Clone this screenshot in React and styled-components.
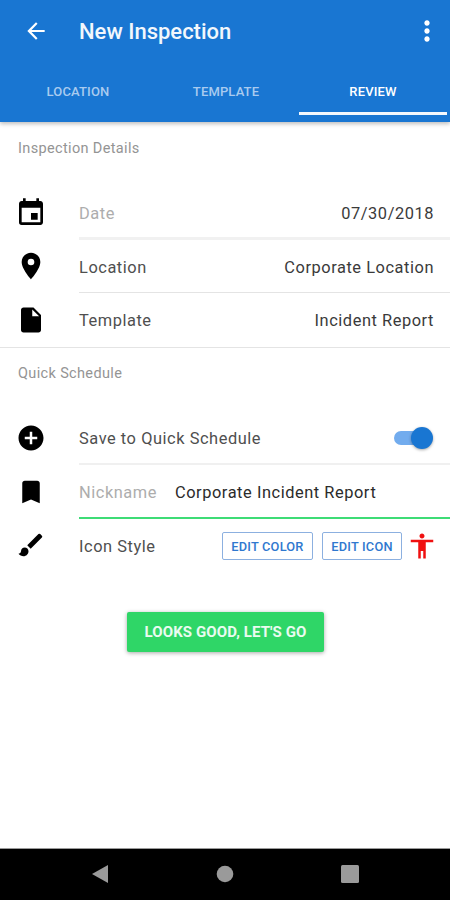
import React from 'react';
import styled, { createGlobalStyle } from 'styled-components';
import {
  MdAccessibility,
  MdAddCircle,
  MdArrowBack,
  MdBookmark,
  MdBrush,
  MdEvent,
  MdInsertDriveFile,
  MdMoreVert,
  MdPlace,
} from 'react-icons/md';

const GlobalStyle = createGlobalStyle`
  html, body {
    margin: 0;
    padding: 0;
    background: #fff;
  }
  * {
    box-sizing: border-box;
  }
`;

const Screen = styled('div')`
  width: 450px;
  height: 900px;
  display: flex;
  flex-direction: column;
  overflow: hidden;
  font-family: Roboto, 'Liberation Sans', sans-serif;
  background: #fff;
`;

const Header = styled('header')`
  height: 122px;
  flex: none;
  background: #1976d2;
  box-shadow: 0 2px 4px rgba(0, 0, 0, 0.25);
  display: flex;
  flex-direction: column;
`;

const Toolbar = styled('div')`
  height: 62px;
  display: flex;
  align-items: center;
  color: #fff;
  padding: 0 7px 0 23px;
`;

const Title = styled('h1')`
  flex: 1;
  margin: 0 0 0 30px;
  font-size: 22px;
  font-weight: 500;
  color: #f2f7fc;
`;

const Tabs = styled('nav')`
  flex: 1;
  display: grid;
  grid-template-columns: 156px 140px 151px;
`;

const Tab = styled('div')`
  display: flex;
  align-items: center;
  justify-content: center;
  height: 53px;
  padding-top: 9px;
  font-size: 13px;
  font-weight: 500;
  letter-spacing: 0.15px;
  color: #a9cbef;
  border-bottom: 3px solid transparent;
`;

const ActiveTab = styled(Tab)`
  margin-left: 3px;
  color: #fff;
  border-bottom-color: #f4f8fd;
`;

const Content = styled('main')`
  flex: 1;
  display: flex;
  flex-direction: column;
`;

const SectionTitle = styled('h2')`
  margin: 0;
  height: 64px;
  padding: ${(p) => p.$top}px 0 0 18px;
  font-size: 14.5px;
  font-weight: 400;
  letter-spacing: 0.35px;
  line-height: 18px;
  color: #949494;
`;

const Row = styled('div')`
  height: 53.5px;
  display: flex;
  align-items: center;
`;

const IconSlot = styled('div')`
  width: 79px;
  flex: none;
  padding-left: 15px;
  color: #000;
`;

const IconBox = styled('div')`
  width: 32px;
  height: 32px;
  display: flex;
  align-items: center;
  justify-content: center;
`;

const RowBody = styled('div')`
  flex: 1;
  height: 100%;
  display: flex;
  align-items: center;
  justify-content: space-between;
  padding-top: ${(p) => (p.$low ? '4px' : '2px')};
  padding-right: ${(p) => (p.$flush ? '0' : '16px')};
  border-bottom: ${(p) => p.$line || '0 none'};
`;

const Label = styled('span')`
  font-size: 16.4px;
  letter-spacing: 0.55px;
  color: ${(p) => (p.$muted ? '#adadad' : '#4f4f4f')};
`;

const Value = styled('span')`
  font-size: 16.4px;
  letter-spacing: 0.55px;
  color: #3a3a3a;
`;

const FullDivider = styled('div')`
  height: 1px;
  flex: none;
  background: #e4e4e4;
`;

const NicknameValue = styled(Value)`
  flex: 1;
  margin-left: 18px;
  color: #2b2b2b;
`;

const Toggle = styled('div')`
  position: relative;
  width: 38px;
  height: 14px;
  margin-right: 2px;
  border-radius: 7px;
  background: #72acee;
`;

const ToggleKnob = styled('div')`
  position: absolute;
  right: -1px;
  top: -4px;
  width: 22px;
  height: 22px;
  border-radius: 50%;
  background: #1976d2;
  box-shadow: 0 1px 3px rgba(0, 0, 0, 0.35);
`;

const StyleActions = styled('div')`
  display: flex;
  align-items: center;
`;

const OutlineButton = styled('button')`
  height: 28px;
  padding: 0;
  width: ${(p) => p.$width}px;
  margin-right: ${(p) => p.$gap}px;
  background: #fff;
  border: 1px solid #8cb0e0;
  border-radius: 2px;
  font-family: inherit;
  font-size: 12.8px;
  font-weight: 500;
  letter-spacing: 0.2px;
  color: #2f78cf;
`;

const RedIcon = styled(MdAccessibility)`
  color: #f01010;
  margin-right: -3px;
`;

const ButtonRow = styled('div')`
  display: flex;
  justify-content: center;
  margin-top: 40px;
  padding-left: 1px;
`;

const PrimaryButton = styled('button')`
  width: 197px;
  height: 40px;
  padding: 0;
  border: 0;
  border-radius: 2px;
  background: #2fd667;
  box-shadow: 0 1px 4px rgba(0, 0, 0, 0.35);
  font-family: inherit;
  font-size: 15px;
  font-weight: 700;
  letter-spacing: 0.1px;
  color: #eafbf0;
`;

const NavBar = styled('footer')`
  height: 52px;
  flex: none;
  background: #000;
  border-top: 1px solid #9a9a9a;
  display: flex;
  align-items: center;
  justify-content: space-between;
  padding: 0 90px 2px;
`;

const NavGlyph = styled('svg')`
  width: 20px;
  height: 20px;
  fill: #9a9a9a;
`;

export default function App() {
  return (
    <Screen>
      <GlobalStyle />
      <Header>
        <Toolbar>
          <MdArrowBack size={26} />
          <Title>New Inspection</Title>
          <MdMoreVert size={32} />
        </Toolbar>
        <Tabs>
          <Tab>LOCATION</Tab>
          <Tab>TEMPLATE</Tab>
          <ActiveTab>REVIEW</ActiveTab>
        </Tabs>
      </Header>
      <Content>
        <SectionTitle $top={18}>Inspection Details</SectionTitle>
        <Row>
          <IconSlot><IconBox><MdEvent size={32} /></IconBox></IconSlot>
          <RowBody $low $line="3px solid #f1f1f1">
            <Label $muted>Date</Label>
            <Value>07/30/2018</Value>
          </RowBody>
        </Row>
        <Row>
          <IconSlot><IconBox><MdPlace size={32} /></IconBox></IconSlot>
          <RowBody $low $line="1px solid #e4e4e4">
            <Label>Location</Label>
            <Value>Corporate Location</Value>
          </RowBody>
        </Row>
        <Row>
          <IconSlot><IconBox><MdInsertDriveFile size={30} /></IconBox></IconSlot>
          <RowBody>
            <Label>Template</Label>
            <Value>Incident Report</Value>
          </RowBody>
        </Row>
        <FullDivider />
        <SectionTitle $top={17}>Quick Schedule</SectionTitle>
        <Row>
          <IconSlot><IconBox><MdAddCircle size={30} /></IconBox></IconSlot>
          <RowBody $line="2px solid #f0f0f0">
            <Label>Save to Quick Schedule</Label>
            <Toggle><ToggleKnob /></Toggle>
          </RowBody>
        </Row>
        <Row>
          <IconSlot><IconBox><MdBookmark size={30} /></IconBox></IconSlot>
          <RowBody $low $flush $line="2px solid #3ddc76">
            <Label $muted>Nickname</Label>
            <NicknameValue>Corporate Incident Report</NicknameValue>
          </RowBody>
        </Row>
        <Row>
          <IconSlot><IconBox><MdBrush size={30} /></IconBox></IconSlot>
          <RowBody>
            <Label>Icon Style</Label>
            <StyleActions>
              <OutlineButton $width={91} $gap={9}>EDIT COLOR</OutlineButton>
              <OutlineButton $width={80} $gap={5}>EDIT ICON</OutlineButton>
              <RedIcon size={30} />
            </StyleActions>
          </RowBody>
        </Row>
        <ButtonRow>
          <PrimaryButton>LOOKS GOOD, LET'S GO</PrimaryButton>
        </ButtonRow>
      </Content>
      <NavBar>
        <NavGlyph viewBox="0 0 20 20"><polygon points="2,10 18,1 18,19" /></NavGlyph>
        <NavGlyph viewBox="0 0 20 20"><circle cx="10" cy="10" r="8.3" /></NavGlyph>
        <NavGlyph viewBox="0 0 20 20"><rect x="1" y="1" width="18" height="18" rx="1.5" /></NavGlyph>
      </NavBar>
    </Screen>
  );
}
